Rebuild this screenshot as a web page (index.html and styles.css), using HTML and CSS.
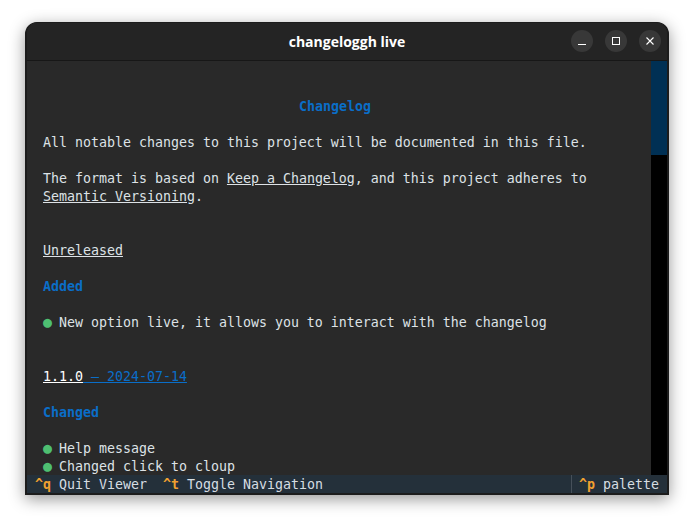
FILE: index.html
```html
<!DOCTYPE html>
<html lang="en">
<head>
<meta charset="utf-8">
<title>changeloggh live</title>
<link rel="stylesheet" href="styles.css">
</head>
<body>
<div class="window">
  <header class="titlebar">
    <div class="title">changeloggh live</div>
    <div class="controls">
      <button class="ctl" aria-label="Minimize"><svg width="16" height="16" viewBox="0 0 16 16"><path d="M4 11.5h8" stroke="#fff" stroke-width="1" fill="none"/></svg></button>
      <button class="ctl" aria-label="Maximize"><svg width="16" height="16" viewBox="0 0 16 16"><rect x="4.5" y="4.5" width="7" height="7" stroke="#fff" stroke-width="1" fill="none"/></svg></button>
      <button class="ctl" aria-label="Close"><svg width="16" height="16" viewBox="0 0 16 16"><path d="M4.5 4.5l7 7M11.5 4.5l-7 7" stroke="#fff" stroke-width="1.1" fill="none"/></svg></button>
    </div>
  </header>
  <div class="terminal">
    <main class="doc">
      <div class="row"></div>
      <div class="row"></div>
      <div class="row heading center">Changelog</div>
      <div class="row"></div>
      <div class="row">All notable changes to this project will be documented in this file.</div>
      <div class="row"></div>
      <div class="row">The format is based on <u>Keep a Changelog</u>, and this project adheres to</div>
      <div class="row"><u>Semantic Versioning</u>.</div>
      <div class="row"></div>
      <div class="row"></div>
      <div class="row"><u>Unreleased</u></div>
      <div class="row"></div>
      <div class="row heading">Added</div>
      <div class="row"></div>
      <div class="row"><span class="dot">●</span> New option live, it allows you to interact with the changelog</div>
      <div class="row"></div>
      <div class="row"></div>
      <div class="row version"><u class="white">1.1.0</u><u class="blue"> – 2024-07-14</u></div>
      <div class="row"></div>
      <div class="row heading">Changed</div>
      <div class="row"></div>
      <div class="row"><span class="dot">●</span> Help message</div>
      <div class="row"><span class="dot">●</span> Changed click to cloup</div>
    </main>
    <div class="scrollbar"><div class="thumb"></div></div>
  </div>
  <footer class="status">
    <div class="keys"><b>^q</b> Quit Viewer  <b>^t</b> Toggle Navigation</div>
    <div class="palette"><b>^p</b> palette</div>
  </footer>
</div>
</body>
</html>
```
FILE: styles.css
```css
html, body { margin: 0; padding: 0; background: #fff; }
body { padding: 22px 25px 28px; height: 523px; box-sizing: border-box; overflow: hidden; }
.window {
  width: 644px; height: 473px; box-sizing: border-box;
  display: flex; flex-direction: column;
  background: #292929;
  border: solid #1c1c1c; border-width: 1px 2px 2px 2px;
  border-radius: 12px 12px 0 0;
  box-shadow: 0 4px 16px rgba(0,0,0,.42);
  overflow: hidden;
  font-family: "DejaVu Sans Mono", monospace;
  font-size: 13.29px;
}
.titlebar {
  height: 37px; flex: none; position: relative;
  display: flex; align-items: center; justify-content: center;
  background: #242424; border-bottom: 1px solid #171717;
}
.title { font: bold 14px "Open Sans", sans-serif; color: #fff; }
.controls { position: absolute; right: 6px; top: 7px; display: flex; gap: 12px; }
.ctl {
  width: 22px; height: 22px; padding: 0; border: 0; border-radius: 50%;
  background: #383838; display: flex; align-items: center; justify-content: center;
}
.terminal { flex: 1; min-height: 0; display: flex; }
.doc {
  flex: 1; min-width: 0; padding: 1px 24px 0 16px; overflow: hidden;
  line-height: 18px; color: #dde2e6;
}
.row { height: 18px; white-space: pre; }
.center { text-align: center; }
.heading { color: #0a6ec8; font-weight: bold; }
.dot { color: #4ebf71; font-size: 15px; display: inline-block; width: 8px; line-height: 16px; }
.white { color: #fff; }
.blue { color: #0a6ec8; }
.scrollbar { width: 16px; flex: none; background: #000; }
.thumb { height: 94px; background: #003054; }
.status {
  height: 18px; flex: none; box-sizing: border-box; display: flex; justify-content: space-between;
  background: #24303a; color: #d6dde2;
  line-height: 18px; white-space: pre; overflow: hidden;
}
.status b { color: #f0a030; }
.keys { padding: 1px 0 0 8px; }
.palette { padding: 1px 8px 0 7px; border-left: 1px solid #46505a; }
```
